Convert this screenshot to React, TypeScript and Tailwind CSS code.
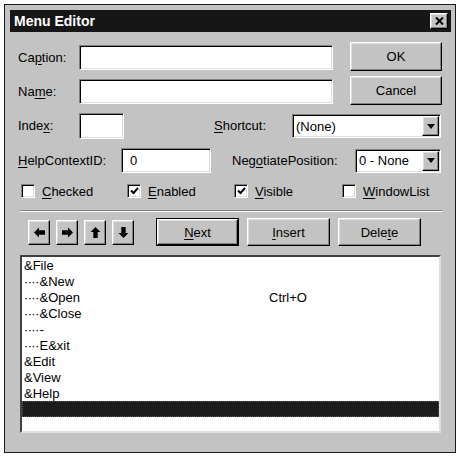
import React from "react";

const sunken =
  "bg-white border border-t-[#808080] border-l-[#808080] border-b-white border-r-white shadow-[inset_1px_1px_0_#000,inset_-1px_-1px_0_#dfdfdf]";
const raised =
  "bg-[#c3c3c3] border border-t-white border-l-white border-b-black border-r-black shadow-[inset_-1px_-1px_0_#808080,inset_1px_1px_0_#dfdfdf]";

function U({ children }: { children: React.ReactNode }) {
  return <span className="underline underline-offset-2">{children}</span>;
}

function DropArrow() {
  return (
    <div className={`${raised} w-[17px] h-full flex items-center justify-center`}>
      <svg width="8" height="5" viewBox="0 0 8 5">
        <polygon points="0,0 8,0 4,5" fill="#000" />
      </svg>
    </div>
  );
}

function Select({ w, text }: { w: string; text: string }) {
  return (
    <div className={`${sunken} ${w} h-[24px] flex items-stretch p-[1px]`}>
      <div className="flex-1 flex items-center pl-[2px] leading-none">{text}</div>
      <DropArrow />
    </div>
  );
}

function Check({ checked, children, w }: { checked: boolean; children: React.ReactNode; w: string }) {
  return (
    <div className={`${w} flex items-center gap-[7px]`}>
      <div className={`${sunken} w-[14px] h-[14px] flex items-center justify-center`}>
        {checked && (
          <svg width="9" height="8" viewBox="0 0 9 8">
            <polyline points="1,3.5 3.5,6 8,1" fill="none" stroke="#000" strokeWidth="2" />
          </svg>
        )}
      </div>
      <span className="leading-none">{children}</span>
    </div>
  );
}

function ArrowBtn({ rot }: { rot: number }) {
  return (
    <div className={`${raised} w-[22px] h-[25px] flex items-center justify-center`}>
      <svg width="11" height="11" viewBox="0 0 10 10" style={{ transform: `rotate(${rot}deg)` }}>
        <polygon points="0,5 4.5,0.5 4.5,3 10,3 10,7 4.5,7 4.5,9.5" fill="#000" />
      </svg>
    </div>
  );
}

function Btn({ children, def }: { children: React.ReactNode; def?: boolean }) {
  const inner = (
    <div className={`${raised} w-full h-full flex items-center justify-center leading-none`}>{children}</div>
  );
  return def ? (
    <div className="w-[83px] h-[28px] border border-black">{inner}</div>
  ) : (
    <div className="w-[83px] h-[28px]">{inner}</div>
  );
}

const items: [number, string, string][] = [
  [0, "&File", ""],
  [1, "&New", ""],
  [1, "&Open", "Ctrl+O"],
  [1, "&Close", ""],
  [1, "-", ""],
  [1, "E&xit", ""],
  [0, "&Edit", ""],
  [0, "&View", ""],
  [0, "&Help", ""],
];

export default function App() {
  return (
    <div className="w-[460px] h-[460px] bg-white pt-[4px] pl-[4px] font-['Liberation_Sans',Arial,sans-serif] text-[13px] text-black">
      <div className="w-[452px] h-[449px] bg-[#c3c3c3] border border-[#1a1a1a] flex flex-col">
        {/* Title bar */}
        <div className="mt-[5px] ml-[5px] mr-[4px] h-[22px] bg-[#161616] flex items-center justify-between pl-[4px] pr-[3px]">
          <span className="text-white font-bold text-[14px] leading-none">Menu Editor</span>
          <div className={`${raised} w-[18px] h-[16px] flex items-center justify-center`}>
            <svg width="9" height="8" viewBox="0 0 9 8">
              <line x1="1" y1="0.5" x2="8" y2="7.5" stroke="#000" strokeWidth="2" />
              <line x1="8" y1="0.5" x2="1" y2="7.5" stroke="#000" strokeWidth="2" />
            </svg>
          </div>
        </div>

        <div className="px-[13px] flex flex-col">
          {/* Top block */}
          <div className="mt-[10px] flex">
            <div className="flex flex-col pt-[3px] gap-[9px]">
              <div className="flex items-center">
                <span className="w-[61px]">
                  Ca<U>p</U>tion:
                </span>
                <div className={`${sunken} w-[254px] h-[25px]`} />
              </div>
              <div className="flex items-center">
                <span className="w-[61px]">
                  Na<U>m</U>e:
                </span>
                <div className={`${sunken} w-[254px] h-[25px]`} />
              </div>
            </div>
            <div className="ml-[17px] flex flex-col gap-[5px]">
              <div className={`${raised} w-[92px] h-[29px] flex items-center justify-center`}>OK</div>
              <div className={`${raised} w-[92px] h-[29px] flex items-center justify-center`}>Cancel</div>
            </div>
          </div>

          {/* Index / Shortcut */}
          <div className="mt-[8px] flex items-center h-[26px]">
            <span className="w-[61px]">
              Inde<U>x</U>:
            </span>
            <div className={`${sunken} w-[45px] h-[26px]`} />
            <span className="ml-[90px] w-[78px]">
              <U>S</U>hortcut:
            </span>
            <Select w="w-[149px]" text="(None)" />
          </div>

          {/* HelpContextID / NegotiatePosition */}
          <div className="mt-[9px] flex items-center h-[25px]">
            <span className="w-[103px]">
              <U>H</U>elpContextID:
            </span>
            <div className={`${sunken} w-[90px] h-[25px] flex items-center pl-[8px]`}>0</div>
            <span className="ml-[21px] w-[123px]">
              Neg<U>o</U>tiatePosition:
            </span>
            <Select w="w-[86px]" text="0 - None" />
          </div>

          {/* Checkboxes */}
          <div className="mt-[11px] flex items-center pl-[3px]">
            <Check checked={false} w="w-[106px]">
              <U>C</U>hecked
            </Check>
            <Check checked w="w-[107px]">
              <U>E</U>nabled
            </Check>
            <Check checked w="w-[108px]">
              <U>V</U>isible
            </Check>
            <Check checked={false} w="w-[100px]">
              <U>W</U>indowList
            </Check>
          </div>

          {/* Separator */}
          <div className="mt-[12px] ml-[2px] h-[2px] border-t border-t-[#808080] border-b border-b-white" />

          {/* Buttons row */}
          <div className="mt-[6px] flex items-center">
            <div className="ml-[10px] flex gap-[6px]">
              <ArrowBtn rot={0} />
              <ArrowBtn rot={180} />
              <ArrowBtn rot={90} />
              <ArrowBtn rot={270} />
            </div>
            <div className="ml-[22px] flex gap-[8px]">
              <Btn def>
                <U>N</U>ext
              </Btn>
              <Btn>
                <U>I</U>nsert
              </Btn>
              <Btn>
                Dele<U>t</U>e
              </Btn>
            </div>
          </div>

          {/* List box */}
          <div className="mt-[9px] ml-[2px] w-[421px] h-[178px] bg-white border-2 border-t-[#404040] border-l-[#404040] border-b-[#dfdfdf] border-r-[#dfdfdf] flex flex-col">
            {items.map(([lvl, a, b], i) => (
              <div key={i} className="h-[16px] flex items-center pl-[2px] leading-none">
                <span className="w-[245px] flex items-center">
                  {lvl > 0 && <span className="tracking-[-0.7px] mr-[1px]">····</span>}
                  <span>{a}</span>
                </span>
                <span>{b}</span>
              </div>
            ))}
            <div className="h-[16px] bg-[#1c1c1c] border border-dotted border-[#555]" />
          </div>
        </div>
      </div>
    </div>
  );
}
